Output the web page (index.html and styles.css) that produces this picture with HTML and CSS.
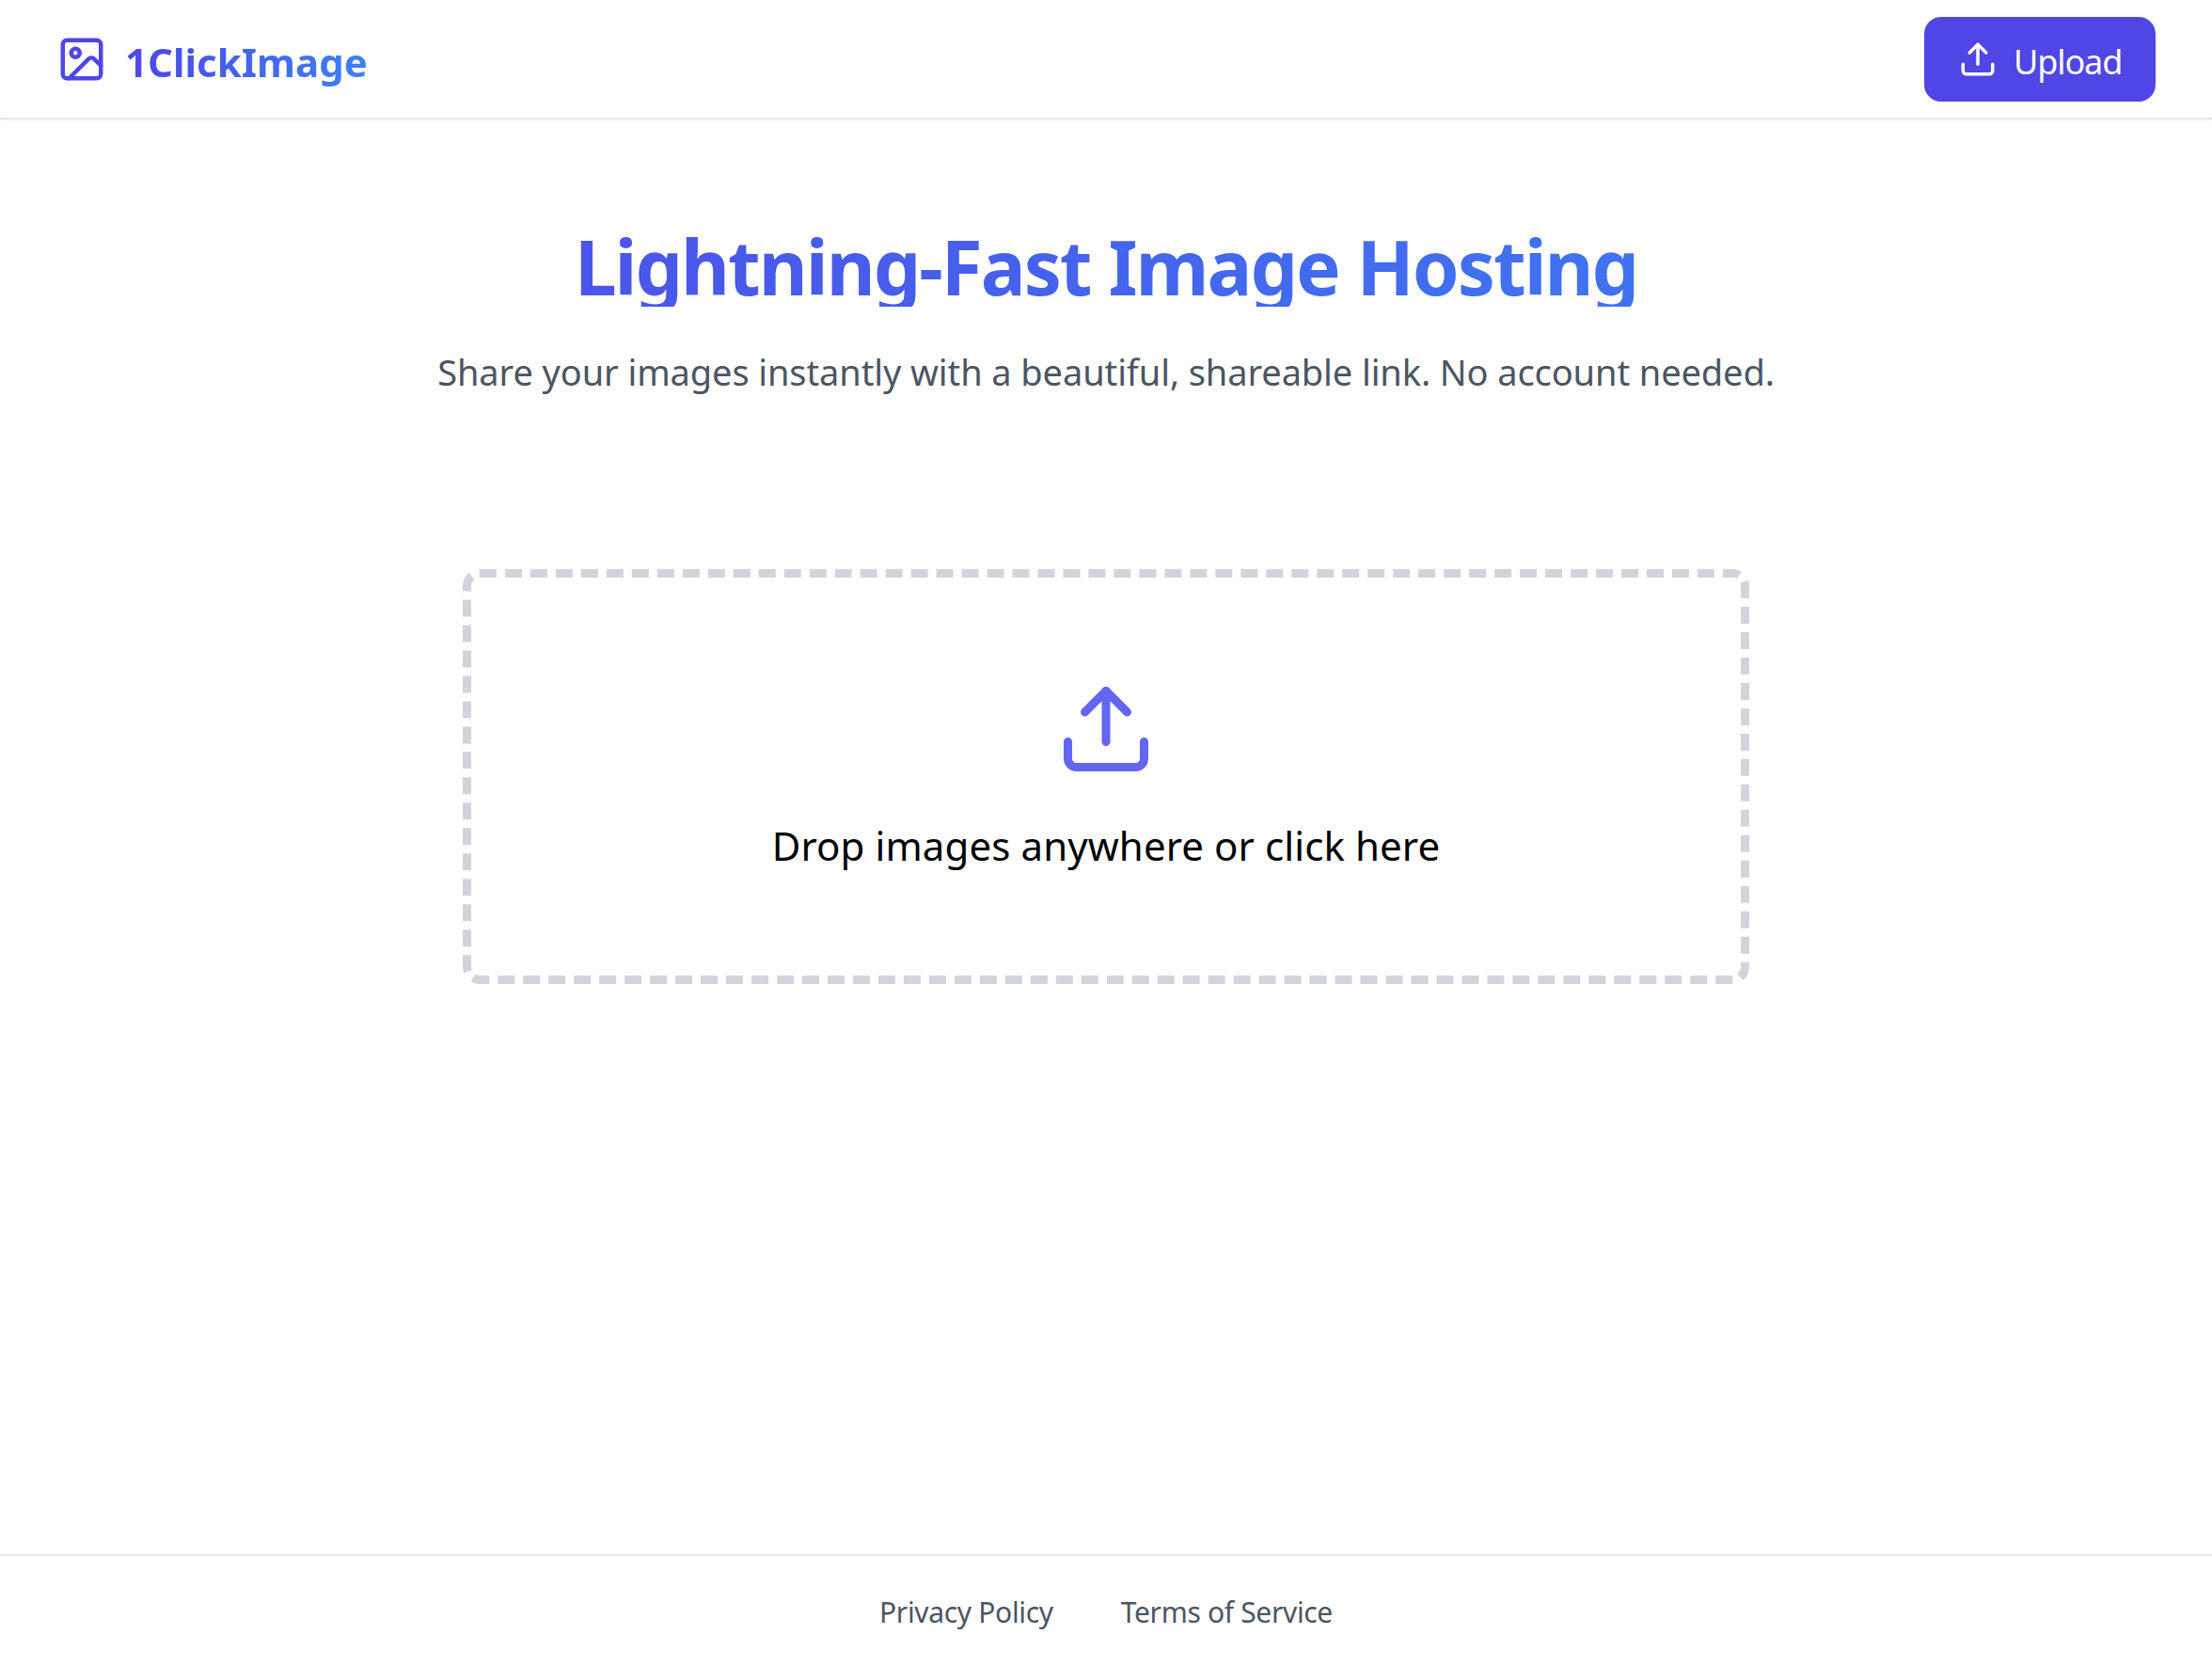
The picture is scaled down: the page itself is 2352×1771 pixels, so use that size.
FILE: index.html
```html
<!DOCTYPE html>
<html lang="en">
<head>
<meta charset="utf-8">
<title>1ClickImage</title>
<link rel="stylesheet" href="styles.css">
</head>
<body>
<header class="site-header">
  <a class="brand" href="#">
    <svg class="brand-icon" viewBox="0 0 24 24" fill="none" stroke="currentColor" stroke-width="2" stroke-linecap="round" stroke-linejoin="round"><rect x="3" y="3" width="18" height="18" rx="2"/><circle cx="9" cy="9" r="2"/><path d="m21 15-3.086-3.086a2 2 0 0 0-2.828 0L6 21"/></svg>
    <span class="brand-name">1ClickImage</span>
  </a>
  <button class="upload-btn">
    <svg class="upload-btn-icon" viewBox="0 0 24 24" fill="none" stroke="currentColor" stroke-width="2" stroke-linecap="round" stroke-linejoin="round"><path d="M21 15v4a2 2 0 0 1-2 2H5a2 2 0 0 1-2-2v-4"/><polyline points="17 8 12 3 7 8"/><line x1="12" y1="3" x2="12" y2="15"/></svg>
    <span class="upload-label">Upload</span>
  </button>
</header>
<main class="main">
  <h1 class="title">Lightning-Fast Image Hosting</h1>
  <p class="subtitle">Share your images instantly with a beautiful, shareable link. No account needed.</p>
  <div class="dropzone">
    <svg class="drop-icon" viewBox="0 0 24 24" fill="none" stroke="currentColor" stroke-width="2" stroke-linecap="round" stroke-linejoin="round"><path d="M21 15v4a2 2 0 0 1-2 2H5a2 2 0 0 1-2-2v-4"/><polyline points="17 8 12 3 7 8"/><line x1="12" y1="3" x2="12" y2="15"/></svg>
    <p class="drop-text">Drop images anywhere or click here</p>
  </div>
</main>
<footer class="site-footer">
  <a href="#">Privacy Policy</a>
  <a href="#">Terms of Service</a>
</footer>
</body>
</html>
```
FILE: styles.css
```css
* { box-sizing: border-box; }
html, body { margin: 0; padding: 0; }
body {
  min-height: 1771px;
  display: flex;
  flex-direction: column;
  background: #fff;
  font-family: "Noto Sans", "Open Sans", sans-serif;
}
.site-header {
  height: 127px;
  padding: 0 60px;
  display: flex;
  align-items: center;
  justify-content: space-between;
  border-bottom: 2px solid #e5e7eb;
  box-shadow: 0 1px 3px rgba(0,0,0,.05);
}
.brand {
  display: flex;
  align-items: center;
  gap: 19px;
  text-decoration: none;
  color: #4f46e5;
}
.brand-icon { width: 54px; height: 54px; display: block; }
.brand-name {
  padding-top: 6px;
  font-size: 42px;
  font-weight: 700;
  letter-spacing: 0;
  background: linear-gradient(90deg, #4f46e5, #3b82f6);
  -webkit-background-clip: text;
  background-clip: text;
  color: transparent;
}
.upload-btn {
  width: 246px;
  height: 90px;
  display: flex;
  align-items: center;
  gap: 17px;
  padding: 0 36px;
  border: 0;
  border-radius: 18px;
  background: #4f46e5;
  color: #fff;
  font: inherit;
  font-size: 36px;
  letter-spacing: -1.1px;
}
.upload-label { padding-top: 6px; }
.upload-btn-icon { width: 42px; height: 42px; flex: none; }
.main {
  flex: 1;
  display: flex;
  flex-direction: column;
  align-items: center;
  padding: 113px 60px 0;
}
.title {
  margin: 0;
  width: 100%;
  text-align: center;
  font-size: 80px;
  line-height: 86px;
  font-weight: 700;
  letter-spacing: -2px;
  background: linear-gradient(90deg, #4f46e5, #3b82f6);
  -webkit-background-clip: text;
  background-clip: text;
  color: transparent;
}
.subtitle {
  margin: 42px 0 0;
  font-size: 38px;
  line-height: 54px;
  color: #4b5563;
  letter-spacing: -0.1px;
}
.dropzone {
  margin-top: 183px;
  width: 1368px;
  height: 441px;
  border: 9px dashed #d1d5db;
  border-radius: 18px;
  display: flex;
  flex-direction: column;
  align-items: center;
  padding-top: 107px;
}
.drop-icon { width: 108px; height: 108px; color: #6366f1; display: block; }
.drop-text {
  margin: 38px 0 0;
  font-size: 42px;
  line-height: 63px;
  color: #000;
  letter-spacing: 0.1px;
}
.site-footer {
  height: 119px;
  padding-top: 2px;
  border-top: 2px solid #e5e7eb;
  display: flex;
  justify-content: center;
  align-items: center;
  gap: 72px;
}
.site-footer a {
  font-size: 30px;
  color: #4b5563;
  text-decoration: none;
  letter-spacing: -0.33px;
}
```
